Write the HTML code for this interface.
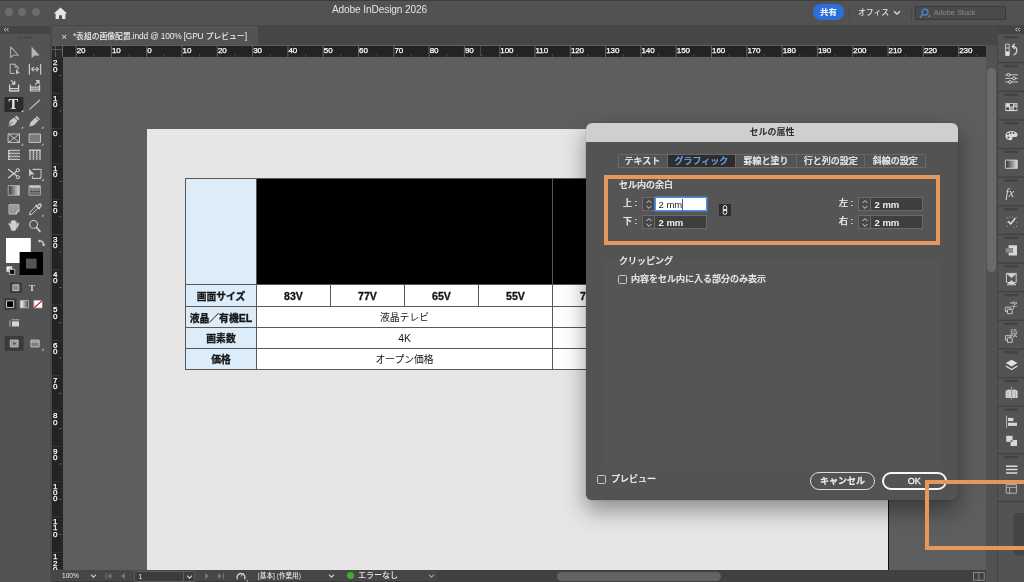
<!DOCTYPE html>
<html lang="ja">
<head>
<meta charset="utf-8">
<title>Adobe InDesign 2026</title>
<style>
*{box-sizing:border-box;margin:0;padding:0}
html,body{width:1024px;height:582px;overflow:hidden;background:#5e5e5e}
body{position:relative;font-family:"Liberation Sans","Noto Sans CJK JP",sans-serif;color:#e6e6e6;font-size:9px;line-height:1}
.abs{position:absolute}
body>.abs,#tblwrap,#titlebar>*,#status>*,#dlg>*{will-change:transform}
#titlebar{left:0;top:0;width:1024px;height:25px;background:#525252;border-top:1px solid #3d3d3d}
.tl{position:absolute;top:6.8px;width:8.4px;height:8.4px;border-radius:50%;background:#6b6b6b}
#apptitle{position:absolute;left:331px;top:4.4px;width:97px;text-align:center;font-size:10.1px;color:#e2e2e2;white-space:nowrap;letter-spacing:-0.1px}
#share{position:absolute;left:813px;top:3px;width:31px;height:16px;border-radius:8px;background:#2b6fdc;color:#fff;font-size:8.5px;text-align:center;line-height:16px;font-weight:bold}
#office{position:absolute;left:857.5px;top:7.6px;font-size:7.8px;color:#e4e4e4;white-space:nowrap;font-weight:500}
.vsep{position:absolute;top:5px;width:1px;height:15px;background:#474747}
#search{position:absolute;left:915px;top:4.5px;width:91px;height:14px;background:#4a4a4a;border:1px solid #3a3a3a;border-radius:1px}
#search span{position:absolute;left:17.5px;top:2.3px;font-size:7.4px;color:#8a8a8a;white-space:nowrap}
/* tab bar */
#tabbar{left:0;top:25px;width:1024px;height:20px;background:#474747}
#tab{position:absolute;left:52px;top:1px;width:206px;height:19px;background:#535353}
#tab .x{position:absolute;left:9.5px;top:5.5px;font-size:9.5px;color:#e0e0e0}
#tab .t i{font-style:normal;font-size:8.4px;letter-spacing:-0.16px}
#tab .t{position:absolute;left:21px;top:5.7px;font-size:7.8px;color:#f0f0f0;white-space:nowrap;font-weight:500}
/* tools */
#tools{left:0;top:25px;width:52px;height:557px;background:#535353;border-right:2px solid #494949}
#toolshead{position:absolute;left:0;top:0.5px;width:50px;height:8.3px;background:#444}
#tools svg{position:absolute;left:0;top:0}
/* rulers */
#hruler{left:52px;top:45.5px;width:934px;height:10.6px;background:#232323;overflow:hidden}
#vruler{left:51.5px;top:57px;width:10.5px;height:513px;background:#232323;overflow:hidden}
#hruler svg,#vruler svg{position:absolute;left:0;top:0}
.rt{font-size:8px;fill:#fff;stroke:#fff;stroke-width:0.25px;letter-spacing:-0.1px;font-family:"Liberation Sans",sans-serif}
/* canvas */
#paste{left:62px;top:56px;width:924px;height:514px;background:#5e5e5e;overflow:hidden}
#page{position:absolute;left:84.5px;top:72.6px;width:742px;height:460px;background:#e6e6e6;border-right:1px solid #111}
/* table */
#tbl{position:absolute;left:185px;top:178px;border-collapse:collapse;font-family:"Liberation Sans","Noto Sans CJK JP",sans-serif;color:#111}
#tblwrap{position:absolute;left:123px;top:122px;width:664px;height:192px;color:#161616;font-size:9.8px}
#tblwrap .c{position:absolute;border:1px solid #585858;text-align:center;white-space:nowrap;margin:0}
#tblwrap .h{background:#dcecf8;font-weight:bold;-webkit-text-stroke:0.3px #161616}
#tblwrap .k{background:#000}
#tblwrap .w{background:#fff}
#tblwrap .b{font-weight:bold;font-size:10.6px;-webkit-text-stroke:0.3px #161616}
#tblwrap .l{font-size:10.4px}
#tblwrap .e{font-size:10.6px}
#tblwrap .c{padding-top:0.8px}
/* status */
#status{left:52px;top:570px;width:934px;height:12px;background:#464646;border-bottom:1px solid #3a3a3a}
#status .s{position:absolute;top:2.5px;font-size:6.6px;color:#e8e8e8;white-space:nowrap;font-weight:500}
/* right */
#vscroll{left:986px;top:45px;width:12px;height:537px;background:#525252;border-right:1.5px solid #464646}
#rpanel{left:998px;top:25px;width:26px;height:557px;background:#535353}
/* dialog */
#dlg{left:586px;top:123px;width:372px;height:376.6px;background:#535353;border-radius:6px;box-shadow:0 10px 22px 1px rgba(0,0,0,.38),0 0 1px rgba(0,0,0,.6)}
#dlgt{position:absolute;left:0;top:0;width:372px;height:19px;background:#cfcfcf;border-radius:6px 6px 0 0;color:#2c2c2c;text-align:center;font-size:9px;line-height:19px;font-weight:bold}
.dtab{position:absolute;top:30.5px;height:14px;border:1px solid #686868;border-left:none;font-size:9px;line-height:12px;text-align:center;color:#ececec;font-weight:500;white-space:nowrap;-webkit-text-stroke:0.22px}
.lbl{position:absolute;font-size:9px;color:#ececec;font-weight:500;white-space:nowrap;-webkit-text-stroke:0.22px #ececec}
.fld{position:absolute;height:14px;background:#3f3f3f;border:1px solid #6a6a6a;font-size:9.5px;color:#f0f0f0}
.fld i{position:absolute;left:-1px;top:-1px;width:13px;height:14px;border:1px solid #6a6a6a;background:#474747}
.fld u{position:absolute;left:12px;top:-1px;right:-1px;height:14px;text-decoration:none}
.fld.on u{background:#fff;border:1px solid #4d8fe6;box-shadow:0 0 0 0.5px #4d8fe6}
.fld b{position:absolute;left:15.5px;top:1.5px;font-weight:bold;white-space:nowrap}
.fld.on b{font-weight:normal;color:#222}
.fld.on b::after{content:"";position:absolute;right:-1px;top:-1px;width:1px;height:11px;background:#2b62c8}
.dtab0{position:absolute;top:30.5px;width:1px;height:14px;background:#686868}
.dtab.act{background:#2d2d2d;color:#6ea6ea}
.grp{position:absolute;background:rgba(255,255,255,.012)}

.chain{position:absolute;width:12px;height:12px;background:#2d2d2d}
.cb{position:absolute;width:8.6px;height:8.6px;border:1px solid #c8c8c8;border-radius:1.5px}
.hl{position:absolute;border:4px solid #e6975b}
.btn{position:absolute;top:349px;height:18px;border-radius:9px;text-align:center;font-size:9px;font-weight:500;color:#f4f4f4;-webkit-text-stroke:0.3px #f4f4f4}
</style>
</head>
<body>
<div id="paste" class="abs"><div id="page"></div><div id="tblwrap">
<div class="c h" style="left:0px;top:0px;width:72px;height:107px;line-height:105px"></div>
<div class="c k" style="left:71px;top:0px;width:297px;height:107px;line-height:105px"></div>
<div class="c k" style="left:367px;top:0px;width:297px;height:107px;line-height:105px"></div>
<div class="c h" style="left:0px;top:106px;width:72px;height:23px;line-height:21px">画面サイズ</div>
<div class="c w b" style="left:71px;top:106px;width:75px;height:23px;line-height:21px">83V</div>
<div class="c w b" style="left:145px;top:106px;width:75px;height:23px;line-height:21px">77V</div>
<div class="c w b" style="left:219px;top:106px;width:75px;height:23px;line-height:21px">65V</div>
<div class="c w b" style="left:293px;top:106px;width:75px;height:23px;line-height:21px">55V</div>
<div class="c w b" style="left:367px;top:106px;width:75px;height:23px;line-height:21px">77V</div>
<div class="c h" style="left:0px;top:128px;width:72px;height:22px;line-height:20px">液晶／有機<span class="e">EL</span></div>
<div class="c w" style="left:71px;top:128px;width:297px;height:22px;line-height:20px">液晶テレビ</div>
<div class="c w" style="left:367px;top:128px;width:297px;height:22px;line-height:20px"></div>
<div class="c h" style="left:0px;top:149px;width:72px;height:22px;line-height:20px">画素数</div>
<div class="c w l" style="left:71px;top:149px;width:297px;height:22px;line-height:20px">4K</div>
<div class="c w" style="left:367px;top:149px;width:297px;height:22px;line-height:20px"></div>
<div class="c h" style="left:0px;top:170px;width:72px;height:22px;line-height:20px">価格</div>
<div class="c w" style="left:71px;top:170px;width:297px;height:22px;line-height:20px">オープン価格</div>
<div class="c w" style="left:367px;top:170px;width:297px;height:22px;line-height:20px"></div>
</div></div>
<div id="titlebar" class="abs">
  <div class="tl" style="left:5px"></div><div class="tl" style="left:18px"></div><div class="tl" style="left:32px"></div>
  <svg class="abs" style="left:53px;top:5.5px" width="15" height="13" viewBox="0 0 15 13"><path d="M7.5 0.5 L0.8 6.4 H2.6 V12 H6 V8.3 H9 V12 H12.4 V6.4 H14.2 Z" fill="#e6e6e6"/></svg>
  <div id="apptitle">Adobe InDesign 2026</div>
  <div id="share">共有</div>
  <div class="vsep" style="left:849px"></div>
  <div id="office">オフィス</div>
  <svg class="abs" style="left:893px;top:9px" width="8" height="6" viewBox="0 0 8 6"><path d="M1 1.2 L4 4.2 L7 1.2" fill="none" stroke="#e0e0e0" stroke-width="1.3"/></svg>
  <div class="vsep" style="left:911px"></div>
  <div id="search"><svg class="abs" style="left:3px;top:1px" width="13" height="11" viewBox="0 0 13 11"><circle cx="6" cy="4.2" r="3" fill="none" stroke="#4a8ae8" stroke-width="1.2"/><path d="M3.8 6.4 L1 9.6" stroke="#4a8ae8" stroke-width="1.3"/><path d="M8.8 7.6 h3.2 l-1.6 1.8z" fill="#4a8ae8"/></svg><span>Adobe Stock</span></div>
</div>
<div id="tabbar" class="abs"><div id="tab"><span class="x">×</span><span class="t"><i>*</i>表組の画像配置<i>.indd @ 100% [GPU </i>プレビュー<i>]</i></span></div></div>
<div id="tools" class="abs"><div id="toolshead"></div><svg width="52" height="557" viewBox="0 0 52 557"><g transform="translate(0,-25)" fill="none" stroke="#c2c2c2" stroke-width="1" stroke-linejoin="round" stroke-linecap="round"><path d="M4.2 28.2L5.6 29.6L4.2 31M6.8 28.2L8.2 29.6L6.8 31" transform="translate(12.4,0) scale(-1,1)" stroke="#ddd" stroke-width="0.9"/><path d="M18.5 37.5H33" stroke="#3f3f3f" stroke-width="1.6" stroke-dasharray="1 0.8" stroke-linecap="butt"/><!-- selection --><path d="M10.6 46.8V57.6L13.4 55.2H18.2Z" stroke="#a8a8a8" stroke-width="1.1"/><path d="M31.6 46.6V58.2L34.6 55.4H39.6Z" fill="#b4b4b4" stroke="none"/><!-- page tool --><path d="M10.2 64.2H15L18 67.2V69.5M10.2 64.2V73.4H14.5M15 64.2V67.2H18" stroke="#b8b8b8"/><path d="M16 69V74.5L17.6 73.2H20Z" fill="#c4c4c4" stroke="none"/><!-- gap tool --><path d="M29.4 64.4V74M40.6 64.4V74" stroke="#c6c6c6" stroke-width="1.3"/><path d="M31.6 69.2H38.4M33.4 67.4L31.6 69.2L33.4 71M36.6 67.4L38.4 69.2L36.6 71" stroke="#c6c6c6" stroke-width="1.1"/><!-- content collector --><path d="M9.6 85V91H18.6V85M9.6 88.6H18.6" stroke="#cfcfcf" stroke-width="1.3"/><path d="M11.4 80.6L14.6 84M14.8 81.4V84.2H12" stroke="#cfcfcf" stroke-width="1.2"/><!-- content placer --><path d="M30.4 85V91H39.6V85M30.4 87.2H39.6M30.4 89.2H39.6" stroke="#cfcfcf" stroke-width="1.2"/><path d="M35.4 84.4L38.8 80.8M36.2 80.6H39V83.4" stroke="#cfcfcf" stroke-width="1.2"/><!-- T selected --><rect x="4.4" y="97" width="19" height="15" fill="#2b2b2b" stroke="none"/><path d="M21 112h2.4v-2.4z" fill="#d0d0d0" stroke="none"/><!-- line --><path d="M29.8 109.2L39.8 100" stroke="#c4c4c4" stroke-width="1.1"/><!-- pen --><path d="M8.4 126.4L10 120.6L14.2 117.6L17.4 121L14.4 125Z" fill="#c8c8c8" stroke="none"/><path d="M14.8 117L16.4 115.6L19.4 118.8L18 120.4Z" fill="#c8c8c8" stroke="none"/><path d="M8.6 126.2L12.6 122" stroke="#535353" stroke-width="0.9"/><path d="M21 128.4h2.2v-2.2z" fill="#c0c0c0" stroke="none"/><!-- pencil --><path d="M29.2 126.6L30.4 122.4L36.8 116L40 119.2L33.6 125.6Z" fill="#c8c8c8" stroke="none"/><path d="M35.6 117.4L38.6 120.4" stroke="#535353" stroke-width="0.9"/><path d="M41.4 128.4h2.2v-2.2z" fill="#c0c0c0" stroke="none"/><!-- rect frame --><path d="M8.5 134H19.5V142.4H8.5ZM8.5 134L19.5 142.4M19.5 134L8.5 142.4" stroke="#c4c4c4" stroke-width="1"/><path d="M21 145.4h2.2v-2.2z" fill="#c0c0c0" stroke="none"/><!-- rectangle --><rect x="29.5" y="134" width="11" height="8.4" fill="#7a7a7a" stroke="#c4c4c4"/><path d="M41.4 145.4h2.2v-2.2z" fill="#c0c0c0" stroke="none"/><!-- grids --><path d="M8.6 150.4H19.4M8.6 153.4H19.4M8.6 156.4H19.4M8.6 159.4H19.4M8.8 150.4V159.4" stroke="#c8c8c8" stroke-width="1.4"/><path d="M11.4 150.4V159.4M14.2 150.4V159.4M17 150.4V159.4" stroke="#8c8c8c" stroke-width="0.9"/><path d="M29.4 150.2H40.4M30 150.4V159.6M33.4 150.4V159.6M36.8 150.4V159.6M40 150.4V159.6" stroke="#c8c8c8" stroke-width="1.4"/><path d="M30 153H40M30 155.4H40M30 157.8H40" stroke="#8c8c8c" stroke-width="0.9"/><!-- scissors --><path d="M8.6 169.4L16.4 175.4M8.6 177.8L16.4 171.4" stroke="#d0d0d0" stroke-width="1.3"/><circle cx="17.8" cy="170.2" r="1.6" stroke="#d0d0d0"/><circle cx="17.8" cy="177.2" r="1.6" stroke="#d0d0d0"/><!-- free transform --><path d="M29 168.6V176.6L31.2 174.6H34.6Z" fill="#c8c8c8" stroke="none"/><path d="M33 169.4H41V178.4H32.4V176.4" stroke="#c8c8c8" stroke-width="1.1" stroke-dasharray="1.4 1.1"/><path d="M41.6 181h2.2v-2.2z" fill="#c0c0c0" stroke="none"/><!-- gradient swatch --><linearGradient id="g1" x1="0" x2="1" y1="0" y2="0"><stop offset="0" stop-color="#3a3a3a"/><stop offset="1" stop-color="#d8d8d8"/></linearGradient><rect x="8.6" y="185.6" width="10.8" height="9.6" fill="url(#g1)" stroke="#bdbdbd" stroke-width="0.8"/><!-- gradient feather --><linearGradient id="g2" x1="0" x2="0" y1="0" y2="1"><stop offset="0" stop-color="#cfcfcf"/><stop offset="1" stop-color="#555"/></linearGradient><rect x="29.4" y="185.6" width="11" height="9.6" fill="url(#g2)" stroke="#bdbdbd" stroke-width="0.8"/><path d="M30.4 189H40M30.4 191.4H40" stroke="#4a4a4a" stroke-width="1.1" stroke-dasharray="1.3 1.3"/><!-- note --><path d="M9.4 204.8H19V211L16.2 214H9.4Z" fill="#8a8a8a" stroke="#c8c8c8"/><path d="M16.2 214V211H19" stroke="#c8c8c8"/><path d="M11 207H17.4M11 209H17.4M11 211H14.4" stroke="#bdbdbd" stroke-width="0.7"/><!-- eyedropper --><path d="M29.6 214.4L30.2 212L36 206.2L38 208.2L32.2 214Z" stroke="#cfcfcf" stroke-width="1"/><path d="M35.8 205.2L39.4 208.8M37 206.4L39 204.4Q40.4 203.6 41 204.6Q41.6 205.6 40.6 206.6L38.6 208.4" stroke="#cfcfcf" stroke-width="1.3"/><path d="M41.4 216.4h2.2v-2.2z" fill="#c0c0c0" stroke="none"/><!-- hand --><path d="M10.6 226.6L8.8 224.4Q8.4 223.4 9.4 223.2L11 224.6V221.6Q11.4 220.6 12.2 221.6V220.8Q12.8 219.8 13.6 220.8V220.6Q14.4 219.8 15 220.8V221.6Q15.8 220.8 16.4 221.8V227Q16.4 229 15 230.6H11.8Q10.8 229 10.6 226.6Z" fill="#cfcfcf" stroke="#cfcfcf" stroke-width="0.6"/><path d="M16.4 225L18 223.2Q19 222.8 18.8 224L17 228" fill="#cfcfcf" stroke="#cfcfcf" stroke-width="0.8"/><!-- zoom --><circle cx="33.6" cy="224.4" r="3.9" stroke="#cfcfcf" stroke-width="1.1"/><path d="M36.4 227.4L40 231.4" stroke="#cfcfcf" stroke-width="1.6"/><!-- fill & stroke --><rect x="6" y="238" width="24.8" height="25" fill="#ffffff" stroke="none"/><rect x="19.6" y="252" width="23.4" height="23" fill="#000" stroke="none"/><rect x="26" y="258.6" width="10.6" height="10" fill="#555" stroke="none"/><path d="M39.6 241Q43.2 240.6 43.6 244.4" stroke="#cfcfcf" stroke-width="1.3"/><path d="M37.8 241L40.2 239.2V242.8Z M43.7 246.6L41.8 244.2H45.6Z" fill="#cfcfcf" stroke="none"/><rect x="7" y="266.6" width="5" height="5" fill="#fff" stroke="#ddd" stroke-width="0.6"/><path d="M8 270.6L11 267.6" stroke="#d22" stroke-width="0.8"/><rect x="9.8" y="269.4" width="5" height="5" fill="#111" stroke="#ddd" stroke-width="0.7"/><!-- formatting affects --><rect x="10" y="282.6" width="12" height="10.4" fill="#3c3c3c" stroke="none"/><rect x="13.2" y="284.8" width="5.6" height="5.8" fill="#8c8c8c" stroke="#cfcfcf" stroke-width="0.9"/><!-- apply color row --><rect x="4.4" y="298.2" width="12" height="11.8" rx="1" fill="#3a3a3a" stroke="none"/><rect x="7" y="300.8" width="6.6" height="6.6" fill="#000" stroke="#e0e0e0" stroke-width="0.9"/><linearGradient id="g3" x1="0" x2="1" y1="0" y2="0"><stop offset="0" stop-color="#fff"/><stop offset="1" stop-color="#444"/></linearGradient><rect x="20.6" y="300.6" width="7.8" height="7.2" fill="url(#g3)" stroke="#ccc" stroke-width="0.7"/><rect x="34.2" y="300.6" width="7.8" height="7.2" fill="#fff" stroke="#ddd" stroke-width="0.6"/><path d="M34.6 307.4L41.6 301" stroke="#e02020" stroke-width="1.3"/><!-- frame-fitting icon --><rect x="12" y="321.4" width="7" height="5" fill="#d8d8d8" stroke="none"/><path d="M10 321V327M12 319.8H19" stroke="#cfcfcf" stroke-width="0.9" stroke-dasharray="1 1"/><!-- view mode --><rect x="4.8" y="336" width="18.8" height="14.8" fill="#3a3a3a" stroke="none"/><rect x="10.7" y="340.1" width="7.4" height="6.8" fill="#8a8a8a" stroke="#d4d4d4" stroke-width="0.9"/><rect x="12.6" y="342" width="3.6" height="3" fill="#555" stroke="#ccc" stroke-width="0.6"/><rect x="31.3" y="340.1" width="7.8" height="6.8" fill="#7d7d7d" stroke="#cfcfcf" stroke-width="0.9"/><path d="M31.3 342H39.1" stroke="#cfcfcf" stroke-width="0.9"/><path d="M41.6 350.4h2.2v-2.2z" fill="#c0c0c0" stroke="none"/></g><text x="8.6" y="84.4" font-family="Liberation Serif,serif" font-weight="bold" font-size="14.5" fill="#e8e8e8">T</text><text x="29" y="265.6" font-family="Liberation Serif,serif" font-weight="bold" font-size="9" fill="#d8d8d8">T</text></svg></div>
<div id="hruler" class="abs"><svg width="934" height="11" viewBox="0 0 934 11"><rect x="13.01" y="9.6" width="1" height="1" fill="#3c3c3c"/><rect x="16.54" y="9.6" width="1" height="1" fill="#3c3c3c"/><rect x="20.07" y="9.6" width="1" height="1" fill="#3c3c3c"/><rect x="23.60" y="0" width="1" height="11" fill="#686868"/><text class="rt" x="24.70" y="6.9">20</text><rect x="27.13" y="9.6" width="1" height="1" fill="#3c3c3c"/><rect x="30.66" y="9.6" width="1" height="1" fill="#3c3c3c"/><rect x="34.19" y="9.6" width="1" height="1" fill="#3c3c3c"/><rect x="37.72" y="9.6" width="1" height="1" fill="#3c3c3c"/><rect x="41.25" y="8" width="1" height="3" fill="#4c4c4c"/><rect x="44.78" y="9.6" width="1" height="1" fill="#3c3c3c"/><rect x="48.31" y="9.6" width="1" height="1" fill="#3c3c3c"/><rect x="51.84" y="9.6" width="1" height="1" fill="#3c3c3c"/><rect x="55.37" y="9.6" width="1" height="1" fill="#3c3c3c"/><rect x="58.90" y="0" width="1" height="11" fill="#686868"/><text class="rt" x="60.00" y="6.9">10</text><rect x="62.43" y="9.6" width="1" height="1" fill="#3c3c3c"/><rect x="65.96" y="9.6" width="1" height="1" fill="#3c3c3c"/><rect x="69.49" y="9.6" width="1" height="1" fill="#3c3c3c"/><rect x="73.02" y="9.6" width="1" height="1" fill="#3c3c3c"/><rect x="76.55" y="8" width="1" height="3" fill="#4c4c4c"/><rect x="80.08" y="9.6" width="1" height="1" fill="#3c3c3c"/><rect x="83.61" y="9.6" width="1" height="1" fill="#3c3c3c"/><rect x="87.14" y="9.6" width="1" height="1" fill="#3c3c3c"/><rect x="90.67" y="9.6" width="1" height="1" fill="#3c3c3c"/><rect x="94.20" y="0" width="1" height="11" fill="#686868"/><text class="rt" x="95.30" y="6.9">0</text><rect x="97.73" y="9.6" width="1" height="1" fill="#3c3c3c"/><rect x="101.26" y="9.6" width="1" height="1" fill="#3c3c3c"/><rect x="104.79" y="9.6" width="1" height="1" fill="#3c3c3c"/><rect x="108.32" y="9.6" width="1" height="1" fill="#3c3c3c"/><rect x="111.85" y="8" width="1" height="3" fill="#4c4c4c"/><rect x="115.38" y="9.6" width="1" height="1" fill="#3c3c3c"/><rect x="118.91" y="9.6" width="1" height="1" fill="#3c3c3c"/><rect x="122.44" y="9.6" width="1" height="1" fill="#3c3c3c"/><rect x="125.97" y="9.6" width="1" height="1" fill="#3c3c3c"/><rect x="129.50" y="0" width="1" height="11" fill="#686868"/><text class="rt" x="130.60" y="6.9">10</text><rect x="133.03" y="9.6" width="1" height="1" fill="#3c3c3c"/><rect x="136.56" y="9.6" width="1" height="1" fill="#3c3c3c"/><rect x="140.09" y="9.6" width="1" height="1" fill="#3c3c3c"/><rect x="143.62" y="9.6" width="1" height="1" fill="#3c3c3c"/><rect x="147.15" y="8" width="1" height="3" fill="#4c4c4c"/><rect x="150.68" y="9.6" width="1" height="1" fill="#3c3c3c"/><rect x="154.21" y="9.6" width="1" height="1" fill="#3c3c3c"/><rect x="157.74" y="9.6" width="1" height="1" fill="#3c3c3c"/><rect x="161.27" y="9.6" width="1" height="1" fill="#3c3c3c"/><rect x="164.80" y="0" width="1" height="11" fill="#686868"/><text class="rt" x="165.90" y="6.9">20</text><rect x="168.33" y="9.6" width="1" height="1" fill="#3c3c3c"/><rect x="171.86" y="9.6" width="1" height="1" fill="#3c3c3c"/><rect x="175.39" y="9.6" width="1" height="1" fill="#3c3c3c"/><rect x="178.92" y="9.6" width="1" height="1" fill="#3c3c3c"/><rect x="182.45" y="8" width="1" height="3" fill="#4c4c4c"/><rect x="185.98" y="9.6" width="1" height="1" fill="#3c3c3c"/><rect x="189.51" y="9.6" width="1" height="1" fill="#3c3c3c"/><rect x="193.04" y="9.6" width="1" height="1" fill="#3c3c3c"/><rect x="196.57" y="9.6" width="1" height="1" fill="#3c3c3c"/><rect x="200.10" y="0" width="1" height="11" fill="#686868"/><text class="rt" x="201.20" y="6.9">30</text><rect x="203.63" y="9.6" width="1" height="1" fill="#3c3c3c"/><rect x="207.16" y="9.6" width="1" height="1" fill="#3c3c3c"/><rect x="210.69" y="9.6" width="1" height="1" fill="#3c3c3c"/><rect x="214.22" y="9.6" width="1" height="1" fill="#3c3c3c"/><rect x="217.75" y="8" width="1" height="3" fill="#4c4c4c"/><rect x="221.28" y="9.6" width="1" height="1" fill="#3c3c3c"/><rect x="224.81" y="9.6" width="1" height="1" fill="#3c3c3c"/><rect x="228.34" y="9.6" width="1" height="1" fill="#3c3c3c"/><rect x="231.87" y="9.6" width="1" height="1" fill="#3c3c3c"/><rect x="235.40" y="0" width="1" height="11" fill="#686868"/><text class="rt" x="236.50" y="6.9">40</text><rect x="238.93" y="9.6" width="1" height="1" fill="#3c3c3c"/><rect x="242.46" y="9.6" width="1" height="1" fill="#3c3c3c"/><rect x="245.99" y="9.6" width="1" height="1" fill="#3c3c3c"/><rect x="249.52" y="9.6" width="1" height="1" fill="#3c3c3c"/><rect x="253.05" y="8" width="1" height="3" fill="#4c4c4c"/><rect x="256.58" y="9.6" width="1" height="1" fill="#3c3c3c"/><rect x="260.11" y="9.6" width="1" height="1" fill="#3c3c3c"/><rect x="263.64" y="9.6" width="1" height="1" fill="#3c3c3c"/><rect x="267.17" y="9.6" width="1" height="1" fill="#3c3c3c"/><rect x="270.70" y="0" width="1" height="11" fill="#686868"/><text class="rt" x="271.80" y="6.9">50</text><rect x="274.23" y="9.6" width="1" height="1" fill="#3c3c3c"/><rect x="277.76" y="9.6" width="1" height="1" fill="#3c3c3c"/><rect x="281.29" y="9.6" width="1" height="1" fill="#3c3c3c"/><rect x="284.82" y="9.6" width="1" height="1" fill="#3c3c3c"/><rect x="288.35" y="8" width="1" height="3" fill="#4c4c4c"/><rect x="291.88" y="9.6" width="1" height="1" fill="#3c3c3c"/><rect x="295.41" y="9.6" width="1" height="1" fill="#3c3c3c"/><rect x="298.94" y="9.6" width="1" height="1" fill="#3c3c3c"/><rect x="302.47" y="9.6" width="1" height="1" fill="#3c3c3c"/><rect x="306.00" y="0" width="1" height="11" fill="#686868"/><text class="rt" x="307.10" y="6.9">60</text><rect x="309.53" y="9.6" width="1" height="1" fill="#3c3c3c"/><rect x="313.06" y="9.6" width="1" height="1" fill="#3c3c3c"/><rect x="316.59" y="9.6" width="1" height="1" fill="#3c3c3c"/><rect x="320.12" y="9.6" width="1" height="1" fill="#3c3c3c"/><rect x="323.65" y="8" width="1" height="3" fill="#4c4c4c"/><rect x="327.18" y="9.6" width="1" height="1" fill="#3c3c3c"/><rect x="330.71" y="9.6" width="1" height="1" fill="#3c3c3c"/><rect x="334.24" y="9.6" width="1" height="1" fill="#3c3c3c"/><rect x="337.77" y="9.6" width="1" height="1" fill="#3c3c3c"/><rect x="341.30" y="0" width="1" height="11" fill="#686868"/><text class="rt" x="342.40" y="6.9">70</text><rect x="344.83" y="9.6" width="1" height="1" fill="#3c3c3c"/><rect x="348.36" y="9.6" width="1" height="1" fill="#3c3c3c"/><rect x="351.89" y="9.6" width="1" height="1" fill="#3c3c3c"/><rect x="355.42" y="9.6" width="1" height="1" fill="#3c3c3c"/><rect x="358.95" y="8" width="1" height="3" fill="#4c4c4c"/><rect x="362.48" y="9.6" width="1" height="1" fill="#3c3c3c"/><rect x="366.01" y="9.6" width="1" height="1" fill="#3c3c3c"/><rect x="369.54" y="9.6" width="1" height="1" fill="#3c3c3c"/><rect x="373.07" y="9.6" width="1" height="1" fill="#3c3c3c"/><rect x="376.60" y="0" width="1" height="11" fill="#686868"/><text class="rt" x="377.70" y="6.9">80</text><rect x="380.13" y="9.6" width="1" height="1" fill="#3c3c3c"/><rect x="383.66" y="9.6" width="1" height="1" fill="#3c3c3c"/><rect x="387.19" y="9.6" width="1" height="1" fill="#3c3c3c"/><rect x="390.72" y="9.6" width="1" height="1" fill="#3c3c3c"/><rect x="394.25" y="8" width="1" height="3" fill="#4c4c4c"/><rect x="397.78" y="9.6" width="1" height="1" fill="#3c3c3c"/><rect x="401.31" y="9.6" width="1" height="1" fill="#3c3c3c"/><rect x="404.84" y="9.6" width="1" height="1" fill="#3c3c3c"/><rect x="408.37" y="9.6" width="1" height="1" fill="#3c3c3c"/><rect x="411.90" y="0" width="1" height="11" fill="#686868"/><text class="rt" x="413.00" y="6.9">90</text><rect x="415.43" y="9.6" width="1" height="1" fill="#3c3c3c"/><rect x="418.96" y="9.6" width="1" height="1" fill="#3c3c3c"/><rect x="422.49" y="9.6" width="1" height="1" fill="#3c3c3c"/><rect x="426.02" y="9.6" width="1" height="1" fill="#3c3c3c"/><rect x="429.55" y="8" width="1" height="3" fill="#4c4c4c"/><rect x="433.08" y="9.6" width="1" height="1" fill="#3c3c3c"/><rect x="436.61" y="9.6" width="1" height="1" fill="#3c3c3c"/><rect x="440.14" y="9.6" width="1" height="1" fill="#3c3c3c"/><rect x="443.67" y="9.6" width="1" height="1" fill="#3c3c3c"/><rect x="447.20" y="0" width="1" height="11" fill="#686868"/><text class="rt" x="448.30" y="6.9">100</text><rect x="450.73" y="9.6" width="1" height="1" fill="#3c3c3c"/><rect x="454.26" y="9.6" width="1" height="1" fill="#3c3c3c"/><rect x="457.79" y="9.6" width="1" height="1" fill="#3c3c3c"/><rect x="461.32" y="9.6" width="1" height="1" fill="#3c3c3c"/><rect x="464.85" y="8" width="1" height="3" fill="#4c4c4c"/><rect x="468.38" y="9.6" width="1" height="1" fill="#3c3c3c"/><rect x="471.91" y="9.6" width="1" height="1" fill="#3c3c3c"/><rect x="475.44" y="9.6" width="1" height="1" fill="#3c3c3c"/><rect x="478.97" y="9.6" width="1" height="1" fill="#3c3c3c"/><rect x="482.50" y="0" width="1" height="11" fill="#686868"/><text class="rt" x="483.60" y="6.9">110</text><rect x="486.03" y="9.6" width="1" height="1" fill="#3c3c3c"/><rect x="489.56" y="9.6" width="1" height="1" fill="#3c3c3c"/><rect x="493.09" y="9.6" width="1" height="1" fill="#3c3c3c"/><rect x="496.62" y="9.6" width="1" height="1" fill="#3c3c3c"/><rect x="500.15" y="8" width="1" height="3" fill="#4c4c4c"/><rect x="503.68" y="9.6" width="1" height="1" fill="#3c3c3c"/><rect x="507.21" y="9.6" width="1" height="1" fill="#3c3c3c"/><rect x="510.74" y="9.6" width="1" height="1" fill="#3c3c3c"/><rect x="514.27" y="9.6" width="1" height="1" fill="#3c3c3c"/><rect x="517.80" y="0" width="1" height="11" fill="#686868"/><text class="rt" x="518.90" y="6.9">120</text><rect x="521.33" y="9.6" width="1" height="1" fill="#3c3c3c"/><rect x="524.86" y="9.6" width="1" height="1" fill="#3c3c3c"/><rect x="528.39" y="9.6" width="1" height="1" fill="#3c3c3c"/><rect x="531.92" y="9.6" width="1" height="1" fill="#3c3c3c"/><rect x="535.45" y="8" width="1" height="3" fill="#4c4c4c"/><rect x="538.98" y="9.6" width="1" height="1" fill="#3c3c3c"/><rect x="542.51" y="9.6" width="1" height="1" fill="#3c3c3c"/><rect x="546.04" y="9.6" width="1" height="1" fill="#3c3c3c"/><rect x="549.57" y="9.6" width="1" height="1" fill="#3c3c3c"/><rect x="553.10" y="0" width="1" height="11" fill="#686868"/><text class="rt" x="554.20" y="6.9">130</text><rect x="556.63" y="9.6" width="1" height="1" fill="#3c3c3c"/><rect x="560.16" y="9.6" width="1" height="1" fill="#3c3c3c"/><rect x="563.69" y="9.6" width="1" height="1" fill="#3c3c3c"/><rect x="567.22" y="9.6" width="1" height="1" fill="#3c3c3c"/><rect x="570.75" y="8" width="1" height="3" fill="#4c4c4c"/><rect x="574.28" y="9.6" width="1" height="1" fill="#3c3c3c"/><rect x="577.81" y="9.6" width="1" height="1" fill="#3c3c3c"/><rect x="581.34" y="9.6" width="1" height="1" fill="#3c3c3c"/><rect x="584.87" y="9.6" width="1" height="1" fill="#3c3c3c"/><rect x="588.40" y="0" width="1" height="11" fill="#686868"/><text class="rt" x="589.50" y="6.9">140</text><rect x="591.93" y="9.6" width="1" height="1" fill="#3c3c3c"/><rect x="595.46" y="9.6" width="1" height="1" fill="#3c3c3c"/><rect x="598.99" y="9.6" width="1" height="1" fill="#3c3c3c"/><rect x="602.52" y="9.6" width="1" height="1" fill="#3c3c3c"/><rect x="606.05" y="8" width="1" height="3" fill="#4c4c4c"/><rect x="609.58" y="9.6" width="1" height="1" fill="#3c3c3c"/><rect x="613.11" y="9.6" width="1" height="1" fill="#3c3c3c"/><rect x="616.64" y="9.6" width="1" height="1" fill="#3c3c3c"/><rect x="620.17" y="9.6" width="1" height="1" fill="#3c3c3c"/><rect x="623.70" y="0" width="1" height="11" fill="#686868"/><text class="rt" x="624.80" y="6.9">150</text><rect x="627.23" y="9.6" width="1" height="1" fill="#3c3c3c"/><rect x="630.76" y="9.6" width="1" height="1" fill="#3c3c3c"/><rect x="634.29" y="9.6" width="1" height="1" fill="#3c3c3c"/><rect x="637.82" y="9.6" width="1" height="1" fill="#3c3c3c"/><rect x="641.35" y="8" width="1" height="3" fill="#4c4c4c"/><rect x="644.88" y="9.6" width="1" height="1" fill="#3c3c3c"/><rect x="648.41" y="9.6" width="1" height="1" fill="#3c3c3c"/><rect x="651.94" y="9.6" width="1" height="1" fill="#3c3c3c"/><rect x="655.47" y="9.6" width="1" height="1" fill="#3c3c3c"/><rect x="659.00" y="0" width="1" height="11" fill="#686868"/><text class="rt" x="660.10" y="6.9">160</text><rect x="662.53" y="9.6" width="1" height="1" fill="#3c3c3c"/><rect x="666.06" y="9.6" width="1" height="1" fill="#3c3c3c"/><rect x="669.59" y="9.6" width="1" height="1" fill="#3c3c3c"/><rect x="673.12" y="9.6" width="1" height="1" fill="#3c3c3c"/><rect x="676.65" y="8" width="1" height="3" fill="#4c4c4c"/><rect x="680.18" y="9.6" width="1" height="1" fill="#3c3c3c"/><rect x="683.71" y="9.6" width="1" height="1" fill="#3c3c3c"/><rect x="687.24" y="9.6" width="1" height="1" fill="#3c3c3c"/><rect x="690.77" y="9.6" width="1" height="1" fill="#3c3c3c"/><rect x="694.30" y="0" width="1" height="11" fill="#686868"/><text class="rt" x="695.40" y="6.9">170</text><rect x="697.83" y="9.6" width="1" height="1" fill="#3c3c3c"/><rect x="701.36" y="9.6" width="1" height="1" fill="#3c3c3c"/><rect x="704.89" y="9.6" width="1" height="1" fill="#3c3c3c"/><rect x="708.42" y="9.6" width="1" height="1" fill="#3c3c3c"/><rect x="711.95" y="8" width="1" height="3" fill="#4c4c4c"/><rect x="715.48" y="9.6" width="1" height="1" fill="#3c3c3c"/><rect x="719.01" y="9.6" width="1" height="1" fill="#3c3c3c"/><rect x="722.54" y="9.6" width="1" height="1" fill="#3c3c3c"/><rect x="726.07" y="9.6" width="1" height="1" fill="#3c3c3c"/><rect x="729.60" y="0" width="1" height="11" fill="#686868"/><text class="rt" x="730.70" y="6.9">180</text><rect x="733.13" y="9.6" width="1" height="1" fill="#3c3c3c"/><rect x="736.66" y="9.6" width="1" height="1" fill="#3c3c3c"/><rect x="740.19" y="9.6" width="1" height="1" fill="#3c3c3c"/><rect x="743.72" y="9.6" width="1" height="1" fill="#3c3c3c"/><rect x="747.25" y="8" width="1" height="3" fill="#4c4c4c"/><rect x="750.78" y="9.6" width="1" height="1" fill="#3c3c3c"/><rect x="754.31" y="9.6" width="1" height="1" fill="#3c3c3c"/><rect x="757.84" y="9.6" width="1" height="1" fill="#3c3c3c"/><rect x="761.37" y="9.6" width="1" height="1" fill="#3c3c3c"/><rect x="764.90" y="0" width="1" height="11" fill="#686868"/><text class="rt" x="766.00" y="6.9">190</text><rect x="768.43" y="9.6" width="1" height="1" fill="#3c3c3c"/><rect x="771.96" y="9.6" width="1" height="1" fill="#3c3c3c"/><rect x="775.49" y="9.6" width="1" height="1" fill="#3c3c3c"/><rect x="779.02" y="9.6" width="1" height="1" fill="#3c3c3c"/><rect x="782.55" y="8" width="1" height="3" fill="#4c4c4c"/><rect x="786.08" y="9.6" width="1" height="1" fill="#3c3c3c"/><rect x="789.61" y="9.6" width="1" height="1" fill="#3c3c3c"/><rect x="793.14" y="9.6" width="1" height="1" fill="#3c3c3c"/><rect x="796.67" y="9.6" width="1" height="1" fill="#3c3c3c"/><rect x="800.20" y="0" width="1" height="11" fill="#686868"/><text class="rt" x="801.30" y="6.9">200</text><rect x="803.73" y="9.6" width="1" height="1" fill="#3c3c3c"/><rect x="807.26" y="9.6" width="1" height="1" fill="#3c3c3c"/><rect x="810.79" y="9.6" width="1" height="1" fill="#3c3c3c"/><rect x="814.32" y="9.6" width="1" height="1" fill="#3c3c3c"/><rect x="817.85" y="8" width="1" height="3" fill="#4c4c4c"/><rect x="821.38" y="9.6" width="1" height="1" fill="#3c3c3c"/><rect x="824.91" y="9.6" width="1" height="1" fill="#3c3c3c"/><rect x="828.44" y="9.6" width="1" height="1" fill="#3c3c3c"/><rect x="831.97" y="9.6" width="1" height="1" fill="#3c3c3c"/><rect x="835.50" y="0" width="1" height="11" fill="#686868"/><text class="rt" x="836.60" y="6.9">210</text><rect x="839.03" y="9.6" width="1" height="1" fill="#3c3c3c"/><rect x="842.56" y="9.6" width="1" height="1" fill="#3c3c3c"/><rect x="846.09" y="9.6" width="1" height="1" fill="#3c3c3c"/><rect x="849.62" y="9.6" width="1" height="1" fill="#3c3c3c"/><rect x="853.15" y="8" width="1" height="3" fill="#4c4c4c"/><rect x="856.68" y="9.6" width="1" height="1" fill="#3c3c3c"/><rect x="860.21" y="9.6" width="1" height="1" fill="#3c3c3c"/><rect x="863.74" y="9.6" width="1" height="1" fill="#3c3c3c"/><rect x="867.27" y="9.6" width="1" height="1" fill="#3c3c3c"/><rect x="870.80" y="0" width="1" height="11" fill="#686868"/><text class="rt" x="871.90" y="6.9">220</text><rect x="874.33" y="9.6" width="1" height="1" fill="#3c3c3c"/><rect x="877.86" y="9.6" width="1" height="1" fill="#3c3c3c"/><rect x="881.39" y="9.6" width="1" height="1" fill="#3c3c3c"/><rect x="884.92" y="9.6" width="1" height="1" fill="#3c3c3c"/><rect x="888.45" y="8" width="1" height="3" fill="#4c4c4c"/><rect x="891.98" y="9.6" width="1" height="1" fill="#3c3c3c"/><rect x="895.51" y="9.6" width="1" height="1" fill="#3c3c3c"/><rect x="899.04" y="9.6" width="1" height="1" fill="#3c3c3c"/><rect x="902.57" y="9.6" width="1" height="1" fill="#3c3c3c"/><rect x="906.10" y="0" width="1" height="11" fill="#686868"/><text class="rt" x="907.20" y="6.9">230</text><rect x="909.63" y="9.6" width="1" height="1" fill="#3c3c3c"/><rect x="913.16" y="9.6" width="1" height="1" fill="#3c3c3c"/><rect x="916.69" y="9.6" width="1" height="1" fill="#3c3c3c"/><rect x="920.22" y="9.6" width="1" height="1" fill="#3c3c3c"/><rect x="923.75" y="8" width="1" height="3" fill="#4c4c4c"/><rect x="927.28" y="9.6" width="1" height="1" fill="#3c3c3c"/><rect x="930.81" y="9.6" width="1" height="1" fill="#3c3c3c"/><path d="M428.5 0V11" stroke="#777" stroke-width="0.8" stroke-dasharray="1.2 1"/><rect x="0" y="0" width="10.5" height="11" fill="#2a2a2a"/><path d="M0 3.5H10M3.5 0V11" stroke="#666" stroke-width="0.8" fill="none"/><path d="M10.5 0V11" stroke="#777" stroke-width="0.8"/></svg></div>
<div id="vruler" class="abs"><svg width="10" height="513" viewBox="0 0 10 513"><rect x="0" y="0.50" width="10" height="1" fill="#3a3a3a"/><text class="rt" x="0.9" y="8.20">2</text><text class="rt" x="0.9" y="14.50">0</text><rect x="9" y="4.03" width="1" height="1" fill="#3c3c3c"/><rect x="9" y="7.56" width="1" height="1" fill="#3c3c3c"/><rect x="9" y="11.09" width="1" height="1" fill="#3c3c3c"/><rect x="9" y="14.62" width="1" height="1" fill="#3c3c3c"/><rect x="7" y="18.15" width="3" height="1" fill="#5a5a5a"/><rect x="9" y="21.68" width="1" height="1" fill="#3c3c3c"/><rect x="9" y="25.21" width="1" height="1" fill="#3c3c3c"/><rect x="9" y="28.74" width="1" height="1" fill="#3c3c3c"/><rect x="9" y="32.27" width="1" height="1" fill="#3c3c3c"/><rect x="0" y="35.80" width="10" height="1" fill="#3a3a3a"/><text class="rt" x="0.9" y="43.50">1</text><text class="rt" x="0.9" y="49.80">0</text><rect x="9" y="39.33" width="1" height="1" fill="#3c3c3c"/><rect x="9" y="42.86" width="1" height="1" fill="#3c3c3c"/><rect x="9" y="46.39" width="1" height="1" fill="#3c3c3c"/><rect x="9" y="49.92" width="1" height="1" fill="#3c3c3c"/><rect x="7" y="53.45" width="3" height="1" fill="#5a5a5a"/><rect x="9" y="56.98" width="1" height="1" fill="#3c3c3c"/><rect x="9" y="60.51" width="1" height="1" fill="#3c3c3c"/><rect x="9" y="64.04" width="1" height="1" fill="#3c3c3c"/><rect x="9" y="67.57" width="1" height="1" fill="#3c3c3c"/><rect x="0" y="71.10" width="10" height="1" fill="#3a3a3a"/><text class="rt" x="0.9" y="78.80">0</text><rect x="9" y="74.63" width="1" height="1" fill="#3c3c3c"/><rect x="9" y="78.16" width="1" height="1" fill="#3c3c3c"/><rect x="9" y="81.69" width="1" height="1" fill="#3c3c3c"/><rect x="9" y="85.22" width="1" height="1" fill="#3c3c3c"/><rect x="7" y="88.75" width="3" height="1" fill="#5a5a5a"/><rect x="9" y="92.28" width="1" height="1" fill="#3c3c3c"/><rect x="9" y="95.81" width="1" height="1" fill="#3c3c3c"/><rect x="9" y="99.34" width="1" height="1" fill="#3c3c3c"/><rect x="9" y="102.87" width="1" height="1" fill="#3c3c3c"/><rect x="0" y="106.40" width="10" height="1" fill="#3a3a3a"/><text class="rt" x="0.9" y="114.10">1</text><text class="rt" x="0.9" y="120.40">0</text><rect x="9" y="109.93" width="1" height="1" fill="#3c3c3c"/><rect x="9" y="113.46" width="1" height="1" fill="#3c3c3c"/><rect x="9" y="116.99" width="1" height="1" fill="#3c3c3c"/><rect x="9" y="120.52" width="1" height="1" fill="#3c3c3c"/><rect x="7" y="124.05" width="3" height="1" fill="#5a5a5a"/><rect x="9" y="127.58" width="1" height="1" fill="#3c3c3c"/><rect x="9" y="131.11" width="1" height="1" fill="#3c3c3c"/><rect x="9" y="134.64" width="1" height="1" fill="#3c3c3c"/><rect x="9" y="138.17" width="1" height="1" fill="#3c3c3c"/><rect x="0" y="141.70" width="10" height="1" fill="#3a3a3a"/><text class="rt" x="0.9" y="149.40">2</text><text class="rt" x="0.9" y="155.70">0</text><rect x="9" y="145.23" width="1" height="1" fill="#3c3c3c"/><rect x="9" y="148.76" width="1" height="1" fill="#3c3c3c"/><rect x="9" y="152.29" width="1" height="1" fill="#3c3c3c"/><rect x="9" y="155.82" width="1" height="1" fill="#3c3c3c"/><rect x="7" y="159.35" width="3" height="1" fill="#5a5a5a"/><rect x="9" y="162.88" width="1" height="1" fill="#3c3c3c"/><rect x="9" y="166.41" width="1" height="1" fill="#3c3c3c"/><rect x="9" y="169.94" width="1" height="1" fill="#3c3c3c"/><rect x="9" y="173.47" width="1" height="1" fill="#3c3c3c"/><rect x="0" y="177.00" width="10" height="1" fill="#3a3a3a"/><text class="rt" x="0.9" y="184.70">3</text><text class="rt" x="0.9" y="191.00">0</text><rect x="9" y="180.53" width="1" height="1" fill="#3c3c3c"/><rect x="9" y="184.06" width="1" height="1" fill="#3c3c3c"/><rect x="9" y="187.59" width="1" height="1" fill="#3c3c3c"/><rect x="9" y="191.12" width="1" height="1" fill="#3c3c3c"/><rect x="7" y="194.65" width="3" height="1" fill="#5a5a5a"/><rect x="9" y="198.18" width="1" height="1" fill="#3c3c3c"/><rect x="9" y="201.71" width="1" height="1" fill="#3c3c3c"/><rect x="9" y="205.24" width="1" height="1" fill="#3c3c3c"/><rect x="9" y="208.77" width="1" height="1" fill="#3c3c3c"/><rect x="0" y="212.30" width="10" height="1" fill="#3a3a3a"/><text class="rt" x="0.9" y="220.00">4</text><text class="rt" x="0.9" y="226.30">0</text><rect x="9" y="215.83" width="1" height="1" fill="#3c3c3c"/><rect x="9" y="219.36" width="1" height="1" fill="#3c3c3c"/><rect x="9" y="222.89" width="1" height="1" fill="#3c3c3c"/><rect x="9" y="226.42" width="1" height="1" fill="#3c3c3c"/><rect x="7" y="229.95" width="3" height="1" fill="#5a5a5a"/><rect x="9" y="233.48" width="1" height="1" fill="#3c3c3c"/><rect x="9" y="237.01" width="1" height="1" fill="#3c3c3c"/><rect x="9" y="240.54" width="1" height="1" fill="#3c3c3c"/><rect x="9" y="244.07" width="1" height="1" fill="#3c3c3c"/><rect x="0" y="247.60" width="10" height="1" fill="#3a3a3a"/><text class="rt" x="0.9" y="255.30">5</text><text class="rt" x="0.9" y="261.60">0</text><rect x="9" y="251.13" width="1" height="1" fill="#3c3c3c"/><rect x="9" y="254.66" width="1" height="1" fill="#3c3c3c"/><rect x="9" y="258.19" width="1" height="1" fill="#3c3c3c"/><rect x="9" y="261.72" width="1" height="1" fill="#3c3c3c"/><rect x="7" y="265.25" width="3" height="1" fill="#5a5a5a"/><rect x="9" y="268.78" width="1" height="1" fill="#3c3c3c"/><rect x="9" y="272.31" width="1" height="1" fill="#3c3c3c"/><rect x="9" y="275.84" width="1" height="1" fill="#3c3c3c"/><rect x="9" y="279.37" width="1" height="1" fill="#3c3c3c"/><rect x="0" y="282.90" width="10" height="1" fill="#3a3a3a"/><text class="rt" x="0.9" y="290.60">6</text><text class="rt" x="0.9" y="296.90">0</text><rect x="9" y="286.43" width="1" height="1" fill="#3c3c3c"/><rect x="9" y="289.96" width="1" height="1" fill="#3c3c3c"/><rect x="9" y="293.49" width="1" height="1" fill="#3c3c3c"/><rect x="9" y="297.02" width="1" height="1" fill="#3c3c3c"/><rect x="7" y="300.55" width="3" height="1" fill="#5a5a5a"/><rect x="9" y="304.08" width="1" height="1" fill="#3c3c3c"/><rect x="9" y="307.61" width="1" height="1" fill="#3c3c3c"/><rect x="9" y="311.14" width="1" height="1" fill="#3c3c3c"/><rect x="9" y="314.67" width="1" height="1" fill="#3c3c3c"/><rect x="0" y="318.20" width="10" height="1" fill="#3a3a3a"/><text class="rt" x="0.9" y="325.90">7</text><text class="rt" x="0.9" y="332.20">0</text><rect x="9" y="321.73" width="1" height="1" fill="#3c3c3c"/><rect x="9" y="325.26" width="1" height="1" fill="#3c3c3c"/><rect x="9" y="328.79" width="1" height="1" fill="#3c3c3c"/><rect x="9" y="332.32" width="1" height="1" fill="#3c3c3c"/><rect x="7" y="335.85" width="3" height="1" fill="#5a5a5a"/><rect x="9" y="339.38" width="1" height="1" fill="#3c3c3c"/><rect x="9" y="342.91" width="1" height="1" fill="#3c3c3c"/><rect x="9" y="346.44" width="1" height="1" fill="#3c3c3c"/><rect x="9" y="349.97" width="1" height="1" fill="#3c3c3c"/><rect x="0" y="353.50" width="10" height="1" fill="#3a3a3a"/><text class="rt" x="0.9" y="361.20">8</text><text class="rt" x="0.9" y="367.50">0</text><rect x="9" y="357.03" width="1" height="1" fill="#3c3c3c"/><rect x="9" y="360.56" width="1" height="1" fill="#3c3c3c"/><rect x="9" y="364.09" width="1" height="1" fill="#3c3c3c"/><rect x="9" y="367.62" width="1" height="1" fill="#3c3c3c"/><rect x="7" y="371.15" width="3" height="1" fill="#5a5a5a"/><rect x="9" y="374.68" width="1" height="1" fill="#3c3c3c"/><rect x="9" y="378.21" width="1" height="1" fill="#3c3c3c"/><rect x="9" y="381.74" width="1" height="1" fill="#3c3c3c"/><rect x="9" y="385.27" width="1" height="1" fill="#3c3c3c"/><rect x="0" y="388.80" width="10" height="1" fill="#3a3a3a"/><text class="rt" x="0.9" y="396.50">9</text><text class="rt" x="0.9" y="402.80">0</text><rect x="9" y="392.33" width="1" height="1" fill="#3c3c3c"/><rect x="9" y="395.86" width="1" height="1" fill="#3c3c3c"/><rect x="9" y="399.39" width="1" height="1" fill="#3c3c3c"/><rect x="9" y="402.92" width="1" height="1" fill="#3c3c3c"/><rect x="7" y="406.45" width="3" height="1" fill="#5a5a5a"/><rect x="9" y="409.98" width="1" height="1" fill="#3c3c3c"/><rect x="9" y="413.51" width="1" height="1" fill="#3c3c3c"/><rect x="9" y="417.04" width="1" height="1" fill="#3c3c3c"/><rect x="9" y="420.57" width="1" height="1" fill="#3c3c3c"/><rect x="0" y="424.10" width="10" height="1" fill="#3a3a3a"/><text class="rt" x="0.9" y="431.80">1</text><text class="rt" x="0.9" y="438.10">0</text><text class="rt" x="0.9" y="444.40">0</text><rect x="9" y="427.63" width="1" height="1" fill="#3c3c3c"/><rect x="9" y="431.16" width="1" height="1" fill="#3c3c3c"/><rect x="9" y="434.69" width="1" height="1" fill="#3c3c3c"/><rect x="9" y="438.22" width="1" height="1" fill="#3c3c3c"/><rect x="7" y="441.75" width="3" height="1" fill="#5a5a5a"/><rect x="9" y="445.28" width="1" height="1" fill="#3c3c3c"/><rect x="9" y="448.81" width="1" height="1" fill="#3c3c3c"/><rect x="9" y="452.34" width="1" height="1" fill="#3c3c3c"/><rect x="9" y="455.87" width="1" height="1" fill="#3c3c3c"/><rect x="0" y="459.40" width="10" height="1" fill="#3a3a3a"/><text class="rt" x="0.9" y="467.10">1</text><text class="rt" x="0.9" y="473.40">1</text><text class="rt" x="0.9" y="479.70">0</text><rect x="9" y="462.93" width="1" height="1" fill="#3c3c3c"/><rect x="9" y="466.46" width="1" height="1" fill="#3c3c3c"/><rect x="9" y="469.99" width="1" height="1" fill="#3c3c3c"/><rect x="9" y="473.52" width="1" height="1" fill="#3c3c3c"/><rect x="7" y="477.05" width="3" height="1" fill="#5a5a5a"/><rect x="9" y="480.58" width="1" height="1" fill="#3c3c3c"/><rect x="9" y="484.11" width="1" height="1" fill="#3c3c3c"/><rect x="9" y="487.64" width="1" height="1" fill="#3c3c3c"/><rect x="9" y="491.17" width="1" height="1" fill="#3c3c3c"/><rect x="0" y="494.70" width="10" height="1" fill="#3a3a3a"/><text class="rt" x="0.9" y="502.40">1</text><text class="rt" x="0.9" y="508.70">2</text><text class="rt" x="0.9" y="515.00">0</text><rect x="9" y="498.23" width="1" height="1" fill="#3c3c3c"/><rect x="9" y="501.76" width="1" height="1" fill="#3c3c3c"/><rect x="9" y="505.29" width="1" height="1" fill="#3c3c3c"/><rect x="9" y="508.82" width="1" height="1" fill="#3c3c3c"/><rect x="7" y="512.35" width="3" height="1" fill="#5a5a5a"/></svg></div>
<div id="vscroll" class="abs"><div class="abs" style="left:1px;top:23px;width:8.5px;height:204px;border-radius:4.2px;background:#6a6a6a"></div></div>
<div id="rpanel" class="abs"><svg width="26" height="557" viewBox="0 0 26 557"><g transform="translate(-998,-25)" fill="none" stroke="#d0d0d0" stroke-width="1" stroke-linecap="round" stroke-linejoin="round"><rect x="998" y="25" width="26" height="9" fill="#444" stroke="none"/><path d="M1017 28.2L1015.6 29.6L1017 31M1019.6 28.2L1018.2 29.6L1019.6 31" stroke="#ddd" stroke-width="0.9"/><rect x="998" y="62.0" width="26" height="1.2" fill="#3f3f3f" stroke="none"/><rect x="998" y="90.7" width="26" height="1.2" fill="#3f3f3f" stroke="none"/><rect x="998" y="119.3" width="26" height="1.2" fill="#3f3f3f" stroke="none"/><rect x="998" y="147.9" width="26" height="1.2" fill="#3f3f3f" stroke="none"/><rect x="998" y="176.6" width="26" height="1.2" fill="#3f3f3f" stroke="none"/><rect x="998" y="205.2" width="26" height="1.2" fill="#3f3f3f" stroke="none"/><rect x="998" y="233.8" width="26" height="1.2" fill="#3f3f3f" stroke="none"/><rect x="998" y="262.4" width="26" height="1.2" fill="#3f3f3f" stroke="none"/><rect x="998" y="291.1" width="26" height="1.2" fill="#3f3f3f" stroke="none"/><rect x="998" y="319.7" width="26" height="1.2" fill="#3f3f3f" stroke="none"/><rect x="998" y="348.3" width="26" height="1.2" fill="#3f3f3f" stroke="none"/><rect x="998" y="377.0" width="26" height="1.2" fill="#3f3f3f" stroke="none"/><rect x="998" y="405.6" width="26" height="1.2" fill="#3f3f3f" stroke="none"/><rect x="998" y="453.0" width="26" height="1.2" fill="#3f3f3f" stroke="none"/><rect x="998" y="501.0" width="26" height="1.2" fill="#3f3f3f" stroke="none"/><rect x="1004.2" y="36.2" width="13.8" height="2.4" rx="0.5" fill="#424242" stroke="none"/><rect x="1004.2" y="64.8" width="13.8" height="2.4" rx="0.5" fill="#424242" stroke="none"/><rect x="1004.2" y="93.5" width="13.8" height="2.4" rx="0.5" fill="#424242" stroke="none"/><rect x="1004.2" y="122.1" width="13.8" height="2.4" rx="0.5" fill="#424242" stroke="none"/><rect x="1004.2" y="150.7" width="13.8" height="2.4" rx="0.5" fill="#424242" stroke="none"/><rect x="1004.2" y="179.3" width="13.8" height="2.4" rx="0.5" fill="#424242" stroke="none"/><rect x="1004.2" y="208.0" width="13.8" height="2.4" rx="0.5" fill="#424242" stroke="none"/><rect x="1004.2" y="236.6" width="13.8" height="2.4" rx="0.5" fill="#424242" stroke="none"/><rect x="1004.2" y="265.2" width="13.8" height="2.4" rx="0.5" fill="#424242" stroke="none"/><rect x="1004.2" y="293.9" width="13.8" height="2.4" rx="0.5" fill="#424242" stroke="none"/><rect x="1004.2" y="322.5" width="13.8" height="2.4" rx="0.5" fill="#424242" stroke="none"/><rect x="1004.2" y="351.1" width="13.8" height="2.4" rx="0.5" fill="#424242" stroke="none"/><rect x="1004.2" y="379.8" width="13.8" height="2.4" rx="0.5" fill="#424242" stroke="none"/><rect x="1004.2" y="408.4" width="13.8" height="2.4" rx="0.5" fill="#424242" stroke="none"/><rect x="1004.2" y="455.8" width="13.8" height="2.4" rx="0.5" fill="#424242" stroke="none"/><rect x="1006" y="44.2" width="3.2" height="11.4" fill="none" stroke="#cfcfcf" stroke-width="0.9"/><path d="M1006 48.0h3.2M1006 51.8h3.2" stroke="#cfcfcf" stroke-width="0.9"/><rect x="1006" y="51.8" width="3.2" height="3.8" fill="#e0e0e0" stroke="none"/><path d="M1012.4 46.4Q1017 46.4 1016.8 50.8Q1016.6 53.8 1014 54.8M1012.2 46.4L1014.4 44.2M1012.2 46.4L1014.4 48.6" stroke="#d6d6d6" stroke-width="1.3"/><path d="M1005.6 74.8H1017.6" stroke="#d0d0d0" stroke-width="0.9"/><circle cx="1008.6" cy="74.8" r="1.5" fill="#535353" stroke="#d8d8d8" stroke-width="0.9"/><path d="M1005.6 78.4H1017.6" stroke="#d0d0d0" stroke-width="0.9"/><circle cx="1014" cy="78.4" r="1.5" fill="#535353" stroke="#d8d8d8" stroke-width="0.9"/><path d="M1005.6 82.0H1017.6" stroke="#d0d0d0" stroke-width="0.9"/><circle cx="1010" cy="82.0" r="1.5" fill="#535353" stroke="#d8d8d8" stroke-width="0.9"/><rect x="1005.4" y="103.1" width="12" height="8" fill="#d6d6d6" stroke="none"/><rect x="1006.2" y="103.9" width="2.9" height="2.6" fill="#d6d6d6" stroke="none"/><rect x="1006.2" y="107.3" width="2.9" height="2.6" fill="#444" stroke="none"/><rect x="1010.0" y="103.9" width="2.9" height="2.6" fill="#444" stroke="none"/><rect x="1010.0" y="107.3" width="2.9" height="2.6" fill="#a0a0a0" stroke="none"/><rect x="1013.8" y="103.9" width="2.9" height="2.6" fill="#a0a0a0" stroke="none"/><rect x="1013.8" y="107.3" width="2.9" height="2.6" fill="#444" stroke="none"/><path d="M1011.4 131.1Q1005.2 131.3 1005.4 136.3Q1005.8 140.3 1011 140.3Q1012.6 140.1 1012.2 138.7Q1011.8 136.9 1014 137.1Q1017.8 137.3 1017.6 134.7Q1017 131.1 1011.4 131.1Z" fill="#d8d8d8" stroke="none"/><circle cx="1008" cy="134.1" r="1" fill="#535353" stroke="none"/><circle cx="1010.6" cy="132.9" r="1" fill="#535353" stroke="none"/><circle cx="1013.6" cy="133.1" r="1" fill="#535353" stroke="none"/><circle cx="1008.4" cy="137.5" r="1" fill="#535353" stroke="none"/><linearGradient id="rg" x1="0" x2="1" y1="0" y2="0"><stop offset="0" stop-color="#333"/><stop offset="1" stop-color="#ddd"/></linearGradient><rect x="1005.8" y="160.1" width="11.4" height="8.2" fill="url(#rg)" stroke="#d8d8d8" stroke-width="0.9"/><path d="M1008.4 221.6L1010.6 224.0L1015 218.6" stroke="#e0e0e0" stroke-width="1.5"/><rect x="1006.8" y="217.2" width="1" height="1" fill="#a8a8a8" stroke="none"/><rect x="1009.4" y="216.6" width="1" height="1" fill="#a8a8a8" stroke="none"/><rect x="1012.4" y="216.8" width="1" height="1" fill="#a8a8a8" stroke="none"/><rect x="1015.8" y="217.0" width="1" height="1" fill="#a8a8a8" stroke="none"/><rect x="1006.8" y="225.6" width="1" height="1" fill="#a8a8a8" stroke="none"/><rect x="1016.0" y="226.0" width="1" height="1" fill="#a8a8a8" stroke="none"/><rect x="1013.4" y="226.6" width="1" height="1" fill="#a8a8a8" stroke="none"/><rect x="1006.4" y="222.0" width="1" height="1" fill="#a8a8a8" stroke="none"/><rect x="1016.4" y="222.4" width="1" height="1" fill="#a8a8a8" stroke="none"/><path d="M1008.6 245.2H1017V255.6H1008.6V252.6H1013V248.2H1008.6Z" fill="#d8d8d8" stroke="none"/><rect x="1005.6" y="248.2" width="7.4" height="4.4" fill="#8c8c8c" stroke="none"/><rect x="1006.8" y="273.4" width="9.4" height="9" fill="#555" stroke="#d8d8d8" stroke-width="0.9"/><path d="M1006.8 273.4L1011.5 277.8L1016.2 273.4" fill="#d0d0d0" stroke="#d8d8d8" stroke-width="0.7"/><path d="M1007.4 284.6L1011.5 280.4L1015.6 284.6Z" fill="#d8d8d8" stroke="#d8d8d8" stroke-width="0.7"/><rect x="1005.8" y="307.1" width="4.4" height="4.4" fill="#535353" stroke="#d0d0d0" stroke-width="0.9"/><rect x="1007.8" y="309.3" width="4.4" height="4.4" fill="#535353" stroke="#d0d0d0" stroke-width="0.9"/><rect x="1005.8" y="335.7" width="4.4" height="4.4" fill="#535353" stroke="#d0d0d0" stroke-width="0.9"/><rect x="1007.8" y="337.9" width="4.4" height="4.4" fill="#535353" stroke="#d0d0d0" stroke-width="0.9"/><path d="M1011.6 359.7L1017.4 363.1L1011.6 366.5L1005.8 363.1Z" fill="#e0e0e0" stroke="none"/><path d="M1006.2 366.3L1011.6 369.5L1017 366.3" stroke="#e0e0e0" stroke-width="1.3"/><path d="M1005.6 391.0Q1008 388.4 1011 390.0V398.0H1005.6Z M1017.6 391.0Q1015.2 388.4 1012.2 390.0V398.0H1017.6Z" fill="#d4d4d4" stroke="none"/><path d="M1011.6 387.4V399.0" stroke="#bdbdbd" stroke-width="0.8"/><path d="M1008 391.4V397.4M1015.2 391.4V397.4" stroke="#8a8a8a" stroke-width="0.6"/><path d="M1006.6 416.1V427.3" stroke="#d0d0d0" stroke-width="0.9" stroke-dasharray="1 0.8"/><rect x="1008" y="417.9" width="5.4" height="3.2" fill="#d8d8d8" stroke="none"/><rect x="1008" y="422.7" width="9" height="3.2" fill="#d8d8d8" stroke="none"/><rect x="1006.2" y="435.8" width="6.4" height="6" fill="#d8d8d8" stroke="none"/><rect x="1010.6" y="440.0" width="6.4" height="6" fill="#d8d8d8" stroke="none"/><rect x="1010.6" y="440.0" width="2" height="1.8" fill="#6a6a6a" stroke="none"/><path d="M1006 466.2H1017.4M1006 469.6H1017.4M1006 473.0H1017.4" stroke="#dcdcdc" stroke-width="1.5" stroke-linecap="butt"/><rect x="1006.6" y="484.6" width="9.8" height="8.6" fill="none" stroke="#bdbdbd" stroke-width="0.9"/><path d="M1006.6 487.4H1016.4M1009.6 487.4V493.2" stroke="#bdbdbd" stroke-width="0.8"/><rect x="1013.6" y="513" width="20" height="42.6" rx="3" fill="#444" stroke="none"/></g><text x="7.4" y="171.6" font-family="Liberation Serif,serif" font-style="italic" font-size="12" fill="#dcdcdc">fx</text><text x="12" y="282.7" font-family="Noto Sans CJK JP,sans-serif" font-size="7.5" fill="#d0d0d0">字</text><text x="12" y="311.3" font-family="Noto Sans CJK JP,sans-serif" font-size="7.5" fill="#d0d0d0">段</text></svg></div>
<div id="status" class="abs">
<span class="s" style="left:10px">100%</span>
<svg class="abs" style="left:37px;top:3px" width="9" height="6" viewBox="0 0 9 6"><path d="M2 1.6L4.5 4.1L7 1.6" fill="none" stroke="#d0d0d0" stroke-width="1.1"/></svg>
<svg class="abs" style="left:52px;top:2px" width="26" height="8" viewBox="0 0 26 8"><path d="M2.2 1v6" stroke="#777" stroke-width="1.1"/><path d="M7.4 1L3.4 4L7.4 7Z M21 1L17 4L21 7Z" fill="#777"/></svg>
<div class="abs" style="left:82px;top:0.5px;width:61px;height:11px;background:#3c3c3c;border:1px solid #5c5c5c;border-radius:1px"><span class="s" style="left:3.5px;top:1.5px">1</span><div class="abs" style="left:48px;top:0;width:1px;height:9px;background:#5c5c5c"></div><svg class="abs" style="left:50px;top:2px" width="9" height="6" viewBox="0 0 9 6"><path d="M2 1.6L4.5 4.1L7 1.6" fill="none" stroke="#d0d0d0" stroke-width="1.1"/></svg></div>
<svg class="abs" style="left:151px;top:2px" width="26" height="8" viewBox="0 0 26 8"><path d="M2 1L6 4L2 7Z M15 1L19 4L15 7Z" fill="#777"/><path d="M20.4 1v6" stroke="#777" stroke-width="1.1"/></svg>
<svg class="abs" style="left:183px;top:1px" width="14" height="11" viewBox="0 0 14 11"><path d="M2.4 8.2A4 4 0 1 1 9.6 8.2" fill="none" stroke="#cfcfcf" stroke-width="1.4"/><path d="M6 5.4L8 2.6" stroke="#cfcfcf" stroke-width="1"/><path d="M11 9.4h2.4l-1.2 1.3z" fill="#cfcfcf"/></svg>
<span class="s" style="left:206px">[基本] (作業用)</span>
<svg class="abs" style="left:275px;top:3px" width="9" height="6" viewBox="0 0 9 6"><path d="M2 1.6L4.5 4.1L7 1.6" fill="none" stroke="#d0d0d0" stroke-width="1.1"/></svg>
<div class="abs" style="left:294.5px;top:2px;width:7px;height:7px;border-radius:50%;background:#3fae2a"></div>
<span class="s" style="left:306px;top:1.5px;font-size:8px">エラーなし</span>
<svg class="abs" style="left:375px;top:3px" width="9" height="6" viewBox="0 0 9 6"><path d="M2 1.6L4.5 4.1L7 1.6" fill="none" stroke="#a0a0a0" stroke-width="1.1"/></svg>
<div class="abs" style="left:386px;top:0;width:548px;height:12px;background:#404040"></div>
<div class="abs" style="left:504.5px;top:1.5px;width:164px;height:9px;border-radius:4.5px;background:#636363"></div>
<svg class="abs" style="left:920.5px;top:1.5px" width="12" height="9" viewBox="0 0 12 9"><rect x="0.6" y="0.6" width="10.6" height="7.6" fill="none" stroke="#9c9c9c" stroke-width="0.8"/><path d="M5.9 0.6V8.2" stroke="#9c9c9c" stroke-width="0.8"/></svg>
</div>
<div id="dlg" class="abs"><div id="dlgt">セルの属性</div>
<div class="dtab0" style="left:32px"></div>
<div class="dtab" style="left:32.4px;width:49.8px">テキスト</div>
<div class="dtab act" style="left:82.2px;width:67.8px">グラフィック</div>
<div class="dtab" style="left:150.0px;width:61.2px">罫線と塗り</div>
<div class="dtab" style="left:211.2px;width:68.3px">行と列の設定</div>
<div class="dtab" style="left:279.5px;width:59.5px">斜線の設定</div>
<div class="grp" style="left:18px;top:56px;width:336px;height:66px"></div>
<div class="grp" style="left:18px;top:137px;width:336px;height:205px"></div>
<div class="lbl" style="left:33px;top:58px">セル内の余白</div>
<div class="lbl" style="left:37.4px;top:76.0px">上 :</div><div class="fld on" style="left:56.0px;top:73.5px;width:65.0px"><i><svg width="12" height="13" viewBox="0 0 12 13"><path d="M3.6 5 L6 2.6 L8.4 5 M3.6 8 L6 10.4 L8.4 8" fill="none" stroke="#d8d8d8" stroke-width="1"/></svg></i><u></u><b>2 mm</b></div>
<div class="lbl" style="left:37.4px;top:94.0px">下 :</div><div class="fld" style="left:56.0px;top:91.5px;width:65.0px"><i><svg width="12" height="13" viewBox="0 0 12 13"><path d="M3.6 5 L6 2.6 L8.4 5 M3.6 8 L6 10.4 L8.4 8" fill="none" stroke="#d8d8d8" stroke-width="1"/></svg></i><u></u><b>2 mm</b></div>
<div class="lbl" style="left:253.0px;top:76.2px">左 :</div><div class="fld" style="left:271.7px;top:73.7px;width:64.9px"><i><svg width="12" height="13" viewBox="0 0 12 13"><path d="M3.6 5 L6 2.6 L8.4 5 M3.6 8 L6 10.4 L8.4 8" fill="none" stroke="#d8d8d8" stroke-width="1"/></svg></i><u></u><b>2 mm</b></div>
<div class="lbl" style="left:253.0px;top:94.1px">右 :</div><div class="fld" style="left:271.7px;top:91.6px;width:64.9px"><i><svg width="12" height="13" viewBox="0 0 12 13"><path d="M3.6 5 L6 2.6 L8.4 5 M3.6 8 L6 10.4 L8.4 8" fill="none" stroke="#d8d8d8" stroke-width="1"/></svg></i><u></u><b>2 mm</b></div>
<div class="chain" style="left:132.7px;top:81px"><svg width="12" height="12" viewBox="0 0 12 12"><rect x="4.2" y="1.6" width="3.6" height="5" rx="1.8" fill="none" stroke="#eee" stroke-width="1"/><rect x="4.2" y="5.4" width="3.6" height="5" rx="1.8" fill="none" stroke="#eee" stroke-width="1"/></svg></div>
<div class="lbl" style="left:33.3px;top:134px">クリッピング</div>
<div class="cb" style="left:32px;top:151.6px"></div><div class="lbl" style="left:44.6px;top:151.8px">内容をセル内に入る部分のみ表示</div>
<div class="cb" style="left:11px;top:351.8px"></div><div class="lbl" style="left:24.6px;top:352.2px">プレビュー</div>
<div class="btn" style="left:224.3px;width:65.2px;border:1px solid #dcdcdc;line-height:16.5px">キャンセル</div>
<div class="btn" style="left:296.3px;width:64.7px;border:2px solid #f6f6f6;line-height:14.5px">OK</div>
</div>
<div class="hl" style="left:603.5px;top:174.9px;width:336.8px;height:70.5px"></div>
<div class="hl" style="left:924.5px;top:479.9px;width:110px;height:70.2px"></div>
</body>
</html>
